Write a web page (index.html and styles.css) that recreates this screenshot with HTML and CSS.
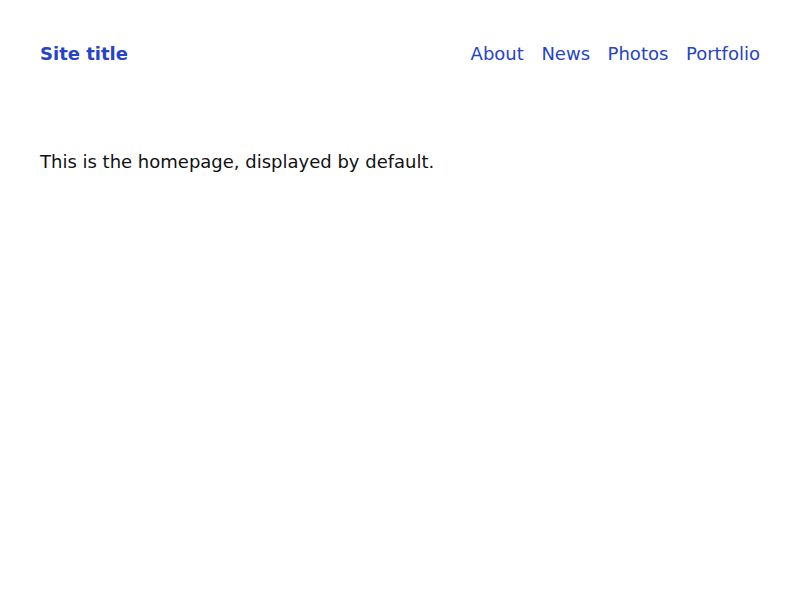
FILE: index.html
```html
<!DOCTYPE html>
<html lang="en">
<head>
    <meta charset="UTF-8">
    <meta name="viewport" content="width=device-width, initial-scale=1.0">
    <title>Site title</title>
    <link rel="stylesheet" href="styles.css">
</head>
<body>
    <header class="site-header">
        <a class="site-title" href="#">Site title</a>
        <nav class="site-nav">
            <a href="#about">About</a>
            <a href="#news">News</a>
            <a href="#photos">Photos</a>
            <a href="#portfolio">Portfolio</a>
        </nav>
    </header>

    <main class="content">
        <p>This is the homepage, displayed by default.</p>
    </main>
</body>
</html>
```

FILE: styles.css
```css
body {
    font-family: 'DejaVu Sans', Verdana, sans-serif;
    font-size: 18px;
    line-height: 22px;
    margin: 0;
    padding: 0;
    background: #fff;
    color: #111;
}

a {
    color: #2544c8;
    text-decoration: none;
}

.site-header {
    display: flex;
    justify-content: space-between;
    align-items: center;
    padding: 43px 40px 0;
}

.site-title {
    font-weight: bold;
}

.site-nav {
    display: flex;
    gap: 17.6px;
}

.content {
    padding: 0 40px;
}

.content p {
    margin: 86px 0 0;
}
```
